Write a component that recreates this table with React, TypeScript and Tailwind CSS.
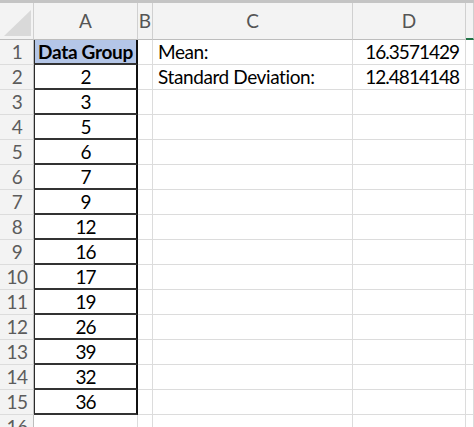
import React from 'react';

const dataValues = [2, 3, 5, 6, 7, 9, 12, 16, 17, 19, 26, 39, 32, 36];

const font = { fontFamily: 'Lato, "Open Sans", "Liberation Sans", sans-serif' };

function Corner() {
  return (
    <div className="h-full border-r border-b border-r-[#d0d0d0] border-b-[#bdbdbd] bg-[#f3f3f3] flex items-end justify-end pr-[2px] pb-[3px]">
      <svg width="27" height="26" viewBox="0 0 27 26">
        <polygon points="27,0 27,26 0,26" fill="#d9d9d9" />
      </svg>
    </div>
  );
}

function ColHeader({ label, last }: { label: string; last?: boolean }) {
  return (
    <div
      className={
        'h-full flex items-center justify-center bg-[#f3f3f3] text-[19px] text-[#555] border-r border-r-[#d0d0d0] ' +
        (last ? 'border-b-2 border-b-[#217346]' : 'border-b border-b-[#bdbdbd]')
      }
    >
      {label}
    </div>
  );
}

function RowHeader({ n }: { n: number }) {
  return (
    <div className="h-[25px] bg-[#f3f3f3] border-r border-b border-r-[#bdbdbd] border-b-[#dcdcdc] flex items-center pt-[1px] pl-[6px] text-[19px] tracking-[-0.5px] text-[#5c5c5c]">
      <span className="w-[22px] text-center">{n}</span>
    </div>
  );
}

function Cell({ children, className = '' }: { children?: React.ReactNode; className?: string }) {
  return (
    <div className={'h-[25px] pt-[1px] border-r border-b border-[#dcdcdc] flex items-center whitespace-nowrap overflow-visible ' + className}>
      {children}
    </div>
  );
}

export default function App() {
  const rows = Array.from({ length: 16 }, (_, i) => i + 1);

  return (
    <div className="w-[474px] h-[427px] overflow-hidden bg-white text-black" style={font}>
      <div className="h-[3px] bg-[#c4c4c4]" />
      <div className="grid grid-cols-[34px_104px_15px_200px_113px_1fr]">
        {/* Column headers */}
        <div className="h-[37px]"><Corner /></div>
        <div className="h-[37px]"><ColHeader label="A" /></div>
        <div className="h-[37px]"><ColHeader label="B" /></div>
        <div className="h-[37px]"><ColHeader label="C" /></div>
        <div className="h-[37px]"><ColHeader label="D" /></div>
        <div className="h-[37px]"><ColHeader label="" last /></div>

        {rows.map((n) => {
          const isHeader = n === 1;
          const value = n >= 2 && n <= 15 ? dataValues[n - 2] : null;
          const boxed = n <= 15;
          return (
            <React.Fragment key={n}>
              <RowHeader n={n} />
              <Cell
                className={
                  'justify-center text-[19px] ' +
                  (boxed ? 'border-l border-l-[#2a2a2a] border-r-2 border-r-[#111] border-b-2 border-b-[#333] ' : '') +
                  (isHeader ? 'bg-[#b4c6e7] font-bold tracking-[-0.3px]' : 'tracking-[-1px]')
                }
              >
                {isHeader ? 'Data Group' : value}
              </Cell>
              <Cell />
              <Cell className="pl-[5px] text-[19px] tracking-[-0.4px]">
                {n === 1 ? 'Mean:' : n === 2 ? 'Standard Deviation:' : null}
              </Cell>
              <Cell className="justify-end pr-[6px] text-[19px] tracking-[-1px]">
                {n === 1 ? '16.3571429' : n === 2 ? '12.4814148' : null}
              </Cell>
              <Cell />
            </React.Fragment>
          );
        })}
      </div>
    </div>
  );
}
